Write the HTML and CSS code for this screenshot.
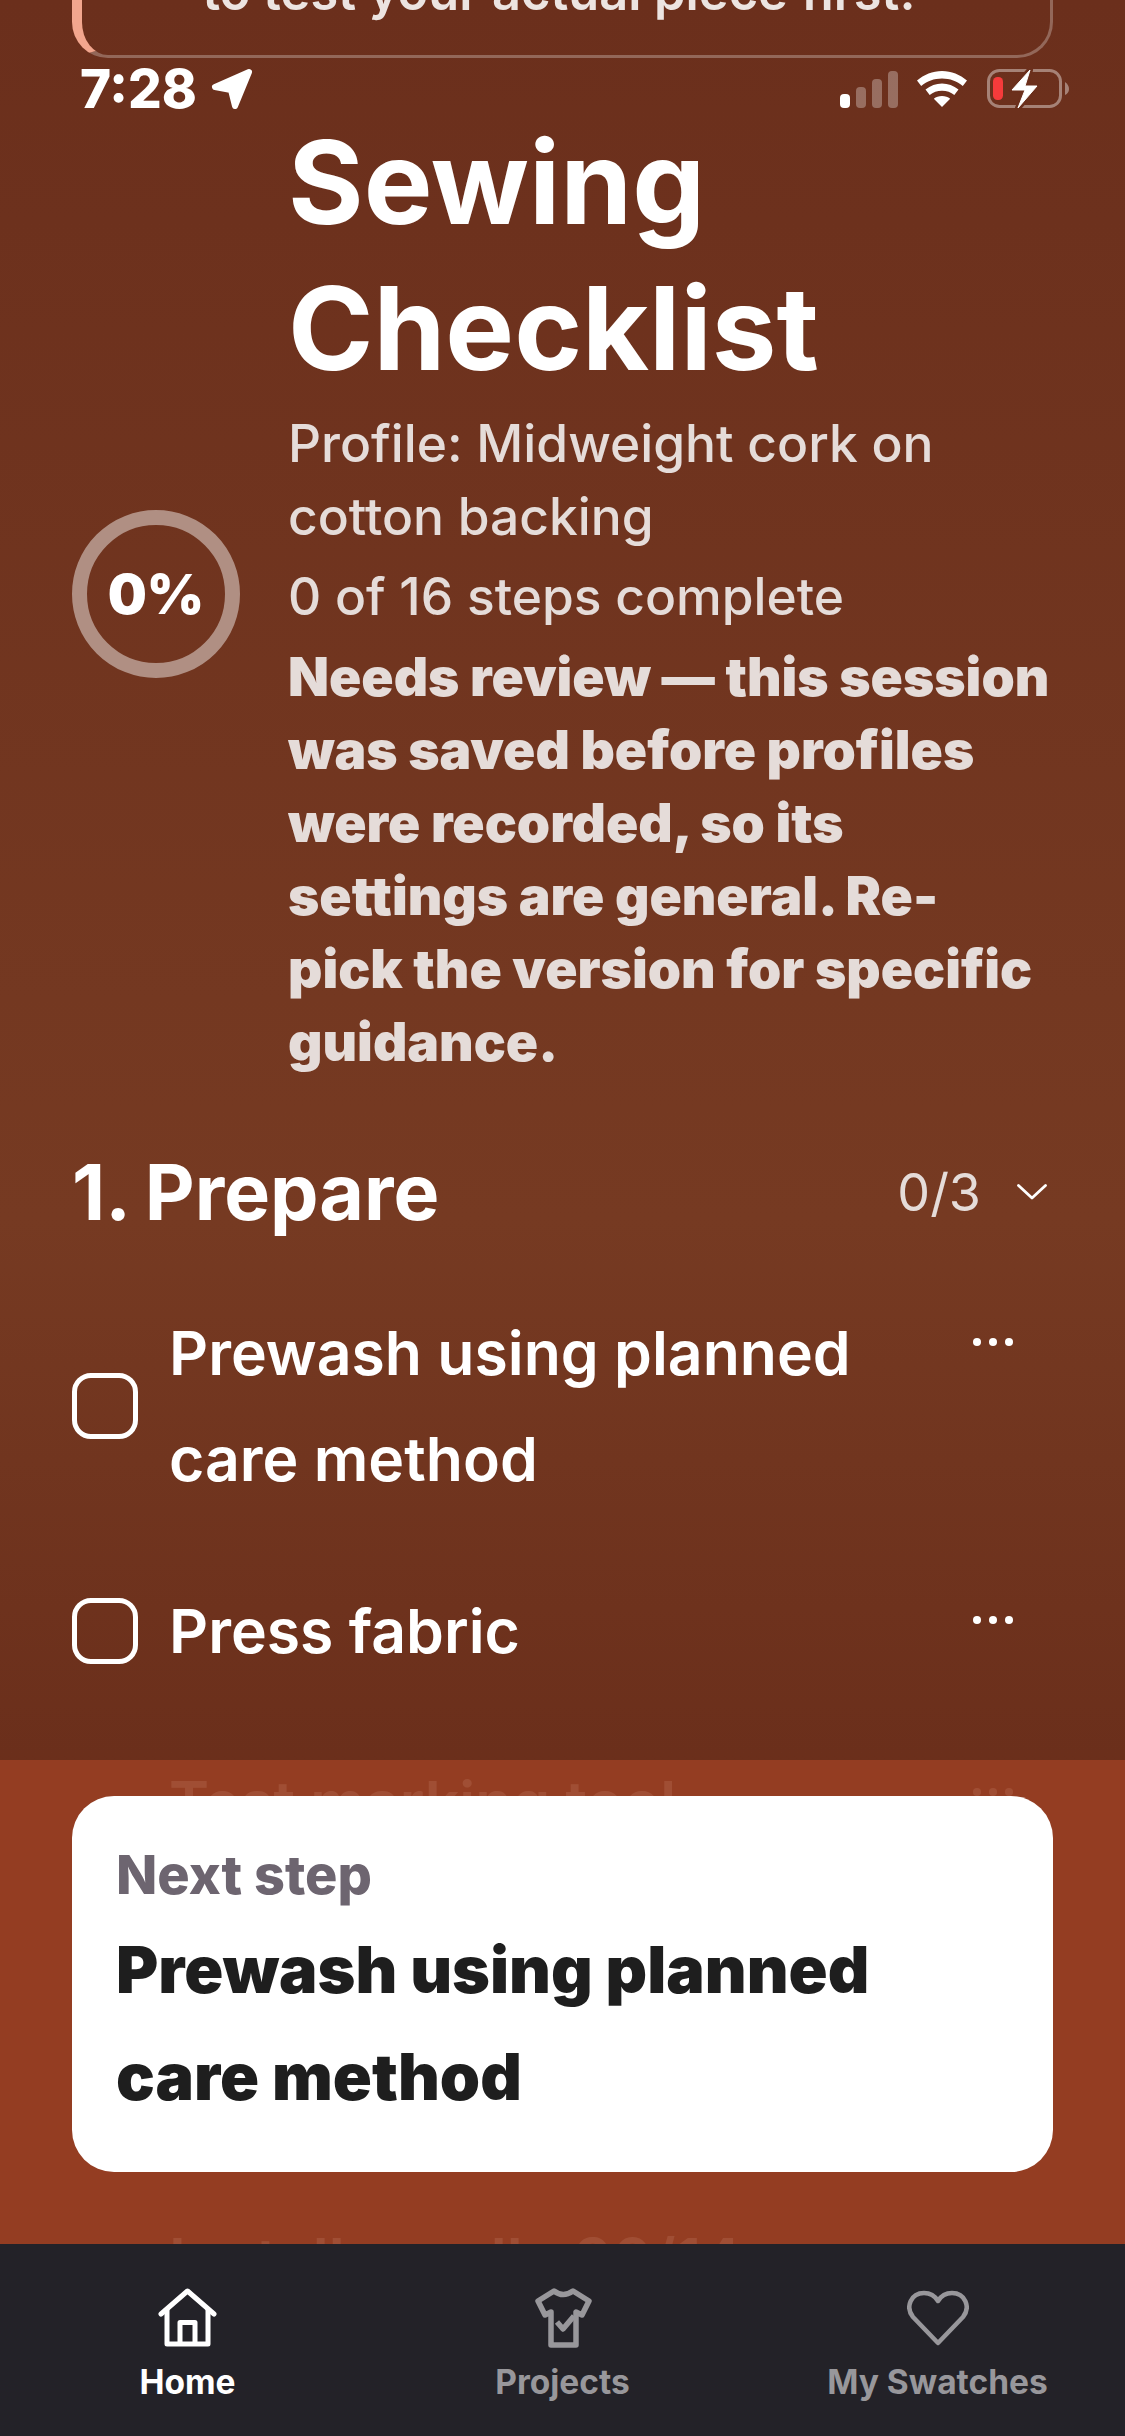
FILE: index.html
```html
<!DOCTYPE html>
<html lang="en">
<head>
<meta charset="utf-8">
<title>Sewing Checklist</title>
<link rel="stylesheet" href="styles.css">
</head>
<body>
<div class="screen">
  <div class="status">
    <div class="status-left">
      <span class="time">7:28</span>
      <svg class="loc" viewBox="0 0 42 42"><path d="M38 4 L4 19 L20 22 L24 38 Z" fill="#fff" stroke="#fff" stroke-width="6" stroke-linejoin="round"/></svg>
    </div>
    <div class="status-right">
      <div class="signal"><i class="bar b1"></i><i class="bar b2"></i><i class="bar b3"></i><i class="bar b4"></i></div>
      <svg class="wifi" viewBox="0 0 50 36"><path d="M25 0C15.500 0 7 3.700 0 9.500L4.200 15C10 10.200 17 7.500 25 7.500S40 10.200 45.800 15L50 9.500C43 3.700 34.500 0 25 0Z M25 12.500C19 12.500 13.500 14.700 8.500 18.500L12.700 24C16 21.300 20.300 19.800 25 19.800S34 21.300 37.300 24L41.500 18.500C36.500 14.700 31 12.500 25 12.500Z M25 25C21.800 25 19 26 16.800 27.800L25 36L33.200 27.800C31 26 28.200 25 25 25Z" fill="#fff"/></svg>
      <svg class="batt" viewBox="0 0 82 40"><rect x="1.500" y="1.500" width="72" height="36" rx="11" fill="none" stroke="#fff" stroke-opacity=".4" stroke-width="3"/><path d="M78 13 Q82 16 82 20 Q82 24 78 26 Z" fill="#fff" fill-opacity=".4"/><rect x="6" y="8" width="10" height="23" rx="4.500" fill="#f63b3b"/><path d="M43 1 L25 21 L38 21 L31 39 L50 17 L38 17 Z" fill="#6b2f1c" stroke="#6b2f1c" stroke-width="6" stroke-linejoin="round"/><path d="M43 1 L25 21 L38 21 L31 39 L50 17 L38 17 Z" fill="#fff" stroke="#fff" stroke-width="1" stroke-linejoin="round"/></svg>
    </div>
  </div>

  <main class="scroll">
    <div class="callout">to test your actual piece first.</div>

    <header class="head">
      <div class="ring">0%</div>
      <div class="head-text">
        <h1 class="title">Sewing Checklist</h1>
        <p class="meta">Profile: Midweight cork on cotton backing</p>
        <p class="meta">0 of 16 steps complete</p>
        <p class="meta strong">Needs review — this session was saved before profiles were recorded, so its settings are general. Re-pick the version for specific guidance.</p>
      </div>
    </header>

    <section class="section">
      <div class="sec-head">
        <h2 class="sec-title">1. Prepare</h2>
        <span class="sec-count">0/3</span>
        <svg class="chev" viewBox="0 0 30 16"><path d="M1.500 1.500 L15 14 L28.500 1.500" fill="none" stroke="#fff" stroke-width="2.800" stroke-linecap="round" stroke-linejoin="round"/></svg>
      </div>
      <div class="item">
        <span class="check"></span>
        <span class="label">Prewash using planned care method</span>
        <span class="dots"><i></i><i></i><i></i></span>
      </div>
      <div class="item">
        <span class="check"></span>
        <span class="label">Press fabric</span>
        <span class="dots"><i></i><i></i><i></i></span>
      </div>
      <div class="item">
        <span class="check check-faded"></span>
        <span class="label">Test marking tool</span>
        <span class="dots"><i></i><i></i><i></i></span>
      </div>
    </section>

    <section class="section-two">
      <div class="item">
        <span class="check check-faded"></span>
        <span class="label">Install needle 90/14</span>
        <span class="dots"><i></i><i></i><i></i></span>
      </div>
    </section>
  </main>

  <div class="next-band">
    <div class="next-card">
      <div class="next-kicker">Next step</div>
      <div class="next-title">Prewash using planned care method</div>
    </div>
  </div>

  <nav class="tabs">
    <div class="tab active">
      <svg class="tab-icon" viewBox="0 0 62 60"><path d="M4 26 L30.500 3 L57 26" fill="none" stroke="currentColor" stroke-width="5" stroke-linecap="round" stroke-linejoin="round"/><path d="M10 21 V56 H51 V21" fill="none" stroke="currentColor" stroke-width="5" stroke-linejoin="round"/><path d="M23 55 V34.500 H38 V55" fill="none" stroke="currentColor" stroke-width="5" stroke-linejoin="round"/></svg>
      <span>Home</span>
    </div>
    <div class="tab">
      <svg class="tab-icon" viewBox="0 0 62 60"><path d="M22 3 Q31 10 41 3 L57 13 L50 27 L44 24 V57 H19 V24 L13 27 L6 13 Z" fill="none" stroke="currentColor" stroke-width="5.500" stroke-linejoin="round"/><path d="M25 34 L31 41 L42 28" fill="none" stroke="currentColor" stroke-width="5.500" stroke-linejoin="round"/></svg>
      <span>Projects</span>
    </div>
    <div class="tab">
      <svg class="tab-icon" viewBox="0 0 62 56"><path d="M31 53 L6 27 C-2 17 4 3 17 3 C23 3 28 6 31 11 C34 6 39 3 45 3 C58 3 64 17 56 27 Z" fill="none" stroke="currentColor" stroke-width="4.500" stroke-linejoin="round"/></svg>
      <span>My Swatches</span>
    </div>
  </nav>
</div>
</body>
</html>
```

FILE: styles.css
```css
* { box-sizing: border-box; }
html, body { margin: 0; padding: 0; }
body { width: 1125px; height: 2436px; overflow: hidden; font-family: Inter, "Liberation Sans", sans-serif; }
.screen {
  position: relative;
  width: 1125px;
  height: 2436px;
  overflow: hidden;
  background: linear-gradient(180deg, #6b2f1c 0%, #763a22 50%, #692d1a 76%, #692d1a 100%);
  display: flex;
  flex-direction: column;
}
.status {
  position: absolute;
  top: 68px;
  left: 80px;
  right: 56px;
  height: 42px;
  display: flex;
  justify-content: space-between;
  align-items: center;
  color: #fff;
}
.status-left { display: flex; align-items: center; gap: 14px; }
.time { font-size: 53px; font-weight: 800; line-height: 42px; }
.loc { width: 42px; height: 42px; }
.status-right { display: flex; align-items: center; }
.signal { display: flex; align-items: flex-end; gap: 6px; height: 37px; margin-right: 19px; }
.bar { display: block; width: 10px; border-radius: 4px; background: rgba(255,255,255,.3); }
.b1 { height: 14px; background: #fff; }
.b2 { height: 21px; }
.b3 { height: 29px; }
.b4 { height: 37px; }
.wifi { width: 50px; height: 36px; margin-right: 20px; }
.batt { width: 82px; height: 40px; }

.scroll { flex: none; padding: 0 72px; }
.callout {
  margin-top: -42px;
  height: 100px;
  border: 3px solid rgba(255,255,255,.27);
  border-left: 10px solid #f2a68e;
  border-radius: 0 0 36px 36px;
  color: #ece4e1;
  font-size: 50.500px;
  font-weight: 600;
  line-height: 62px;
  text-align: center;
  padding-right: 14px;
}
.head { display: flex; align-items: center; gap: 48px; margin-top: 51px; }
.ring {
  flex: none;
  width: 168px;
  height: 168px;
  border: 15px solid #b08f83;
  border-radius: 50%;
  display: flex;
  align-items: center;
  justify-content: center;
  color: #fff;
  font-size: 55px;
  font-weight: 900;
}
.head-text { flex: 1; min-width: 0; color: #e5dcd9; }
.title { margin: 0 0 6px; font-size: 115.500px; line-height: 146px; font-weight: 700; color: #fff; }
.meta { margin: 0 0 7px; font-size: 51.500px; line-height: 73px; font-weight: 500; }
.meta.strong { margin: 0; padding-right: 2px; font-size: 53.300px; font-weight: 900; }

.section { margin-top: 72px; }
.sec-head { display: flex; align-items: center; height: 84px; margin-bottom: 66px; }
.sec-title { flex: 1; margin: 0; font-size: 77px; line-height: 84px; font-weight: 700; color: #fff; word-spacing: -2px; }
.sec-count { font-size: 52px; font-weight: 400; color: #e5dcd9; }
.chev { width: 30px; height: 16px; margin-left: 36px; margin-right: 6px; }
.item { display: flex; align-items: center; margin-bottom: 66px; }
.check { flex: none; width: 66px; height: 66px; border: 5.500px solid #fff; border-radius: 19px; margin-right: 31px; }
.check-faded { border-color: transparent; }
.label { flex: 1; font-size: 60.700px; line-height: 106px; font-weight: 600; color: #fff; padding-right: 100px; }
.dots { flex: none; align-self: flex-start; display: flex; gap: 8px; margin-top: 38px; margin-right: 40px; }
.dots i { display: block; width: 8px; height: 8px; border-radius: 50%; background: #fff; }
.section-two { margin-top: 351px; }

.next-band {
  position: absolute;
  left: 0;
  right: 0;
  top: 1760px;
  height: 484px;
  padding: 36px 72px 0;
  background: rgba(152, 63, 35, .92);
}
.next-card {
  height: 376px;
  background: #fff;
  border-radius: 42px;
  padding: 44px 60px 0 44px;
}
.next-kicker { font-size: 54px; line-height: 70px; font-weight: 800; color: #6d6570; margin-bottom: 7px; }
.next-title { font-size: 64.500px; line-height: 107px; font-weight: 900; color: #1e1e1e; }

.tabs {
  position: absolute;
  left: 0;
  right: 0;
  bottom: 0;
  height: 192px;
  background: #232228;
  display: grid;
  grid-template-columns: repeat(3, 1fr);
  padding: 44px 0 0;
}
.tab { display: flex; flex-direction: column; align-items: center; color: #98979b; font-size: 33.500px; font-weight: 700; line-height: 40px; }
.tab span { margin-top: 14px; }
.tab.active { color: #fff; }
.tab-icon { width: 62px; height: 60px; }
```
